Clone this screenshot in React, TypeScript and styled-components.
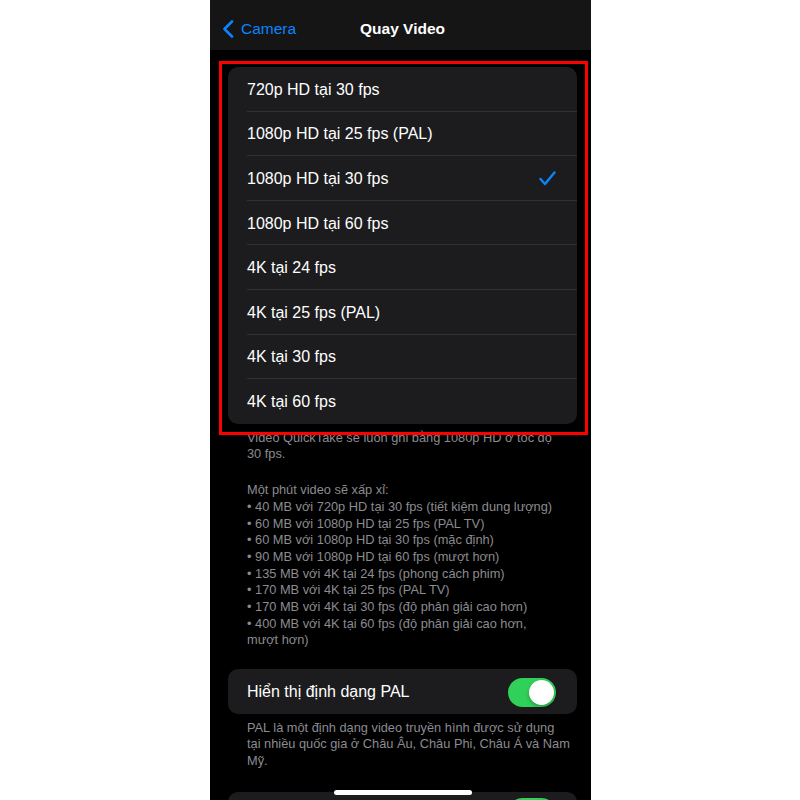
import styled, { createGlobalStyle } from 'styled-components';

const GlobalStyle = createGlobalStyle`
  html, body {
    margin: 0;
    padding: 0;
    background: #ffffff;
  }
  body {
    font-family: "Liberation Sans", Arial, sans-serif;
  }
`;

const formats = [
  '720p HD tại 30 fps',
  '1080p HD tại 25 fps (PAL)',
  '1080p HD tại 30 fps',
  '1080p HD tại 60 fps',
  '4K tại 24 fps',
  '4K tại 25 fps (PAL)',
  '4K tại 30 fps',
  '4K tại 60 fps',
];

const selected = 2;

const estimates = [
  '• 40 MB với 720p HD tại 30 fps (tiết kiệm dung lượng)',
  '• 60 MB với 1080p HD tại 25 fps (PAL TV)',
  '• 60 MB với 1080p HD tại 30 fps (mặc định)',
  '• 90 MB với 1080p HD tại 60 fps (mượt hơn)',
  '• 135 MB với 4K tại 24 fps (phong cách phim)',
  '• 170 MB với 4K tại 25 fps (PAL TV)',
  '• 170 MB với 4K tại 30 fps (độ phân giải cao hơn)',
  '• 400 MB với 4K tại 60 fps (độ phân giải cao hơn, mượt hơn)',
];

function BackChevron() {
  return (
    <svg width="12" height="18" viewBox="0 0 12 18">
      <path d="M10 1.5 L2.5 9 L10 16.5" fill="none" stroke="#0a84ff" strokeWidth="2.6" strokeLinecap="round" strokeLinejoin="round" />
    </svg>
  );
}

function Checkmark() {
  return (
    <svg width="17" height="15" viewBox="0 0 17 15">
      <path d="M1.5 8 L6 13 L15.5 1.5" fill="none" stroke="#0a84ff" strokeWidth="2.4" strokeLinecap="round" strokeLinejoin="round" />
    </svg>
  );
}

function Toggle({ on }: { on: boolean }) {
  return (
    <Track $on={on}>
      <Knob />
    </Track>
  );
}

export default function App() {
  return (
    <>
      <GlobalStyle />
      <Page>
        <Phone>
          <NavBar>
            <BackButton>
              <BackChevron />
              <span>Camera</span>
            </BackButton>
            <NavTitle>Quay Video</NavTitle>
          </NavBar>
          <Content>
            <Card>
              {formats.map((label, i) => (
                <Row key={label}>
                  <RowLabel>{label}</RowLabel>
                  {i === selected && <Checkmark />}
                </Row>
              ))}
            </Card>
            <Footnote>
              Video QuickTake sẽ luôn ghi bằng 1080p HD ở tốc độ 30 fps.
            </Footnote>
            <Footnote $gapTop>
              Một phút video sẽ xấp xỉ:
              {estimates.map((line) => (
                <Bullet key={line}>{line}</Bullet>
              ))}
            </Footnote>
            <Card $gapTop={20}>
              <Row>
                <RowLabel>Hiển thị định dạng PAL</RowLabel>
                <Toggle on />
              </Row>
            </Card>
            <Footnote $narrow>
              PAL là một định dạng video truyền hình được sử dụng tại nhiều quốc gia ở Châu Âu, Châu Phi, Châu Á và Nam Mỹ.
            </Footnote>
            <Card $gapTop={22}>
              <Row $peek>
                <span />
                <Toggle on />
              </Row>
            </Card>
          </Content>
          <HomeIndicator />
        </Phone>
        <Highlight />
      </Page>
    </>
  );
}

const Page = styled.div`
  position: relative;
  width: 800px;
  height: 800px;
  display: flex;
  padding-left: 210px;
  box-sizing: border-box;
  overflow: hidden;
`;

const Phone = styled.div`
  position: relative;
  width: 381px;
  height: 800px;
  background: #000000;
  overflow: hidden;
  display: flex;
  flex-direction: column;
`;

const NavBar = styled.div`
  position: relative;
  height: 50px;
  flex-shrink: 0;
  box-sizing: border-box;
  padding-top: 8px;
  background: #151515;
  display: flex;
  align-items: center;
  justify-content: center;
`;

const BackButton = styled.div`
  position: absolute;
  left: 12px;
  top: 20px;
  display: flex;
  align-items: center;
  gap: 7px;
  color: #0a84ff;
  font-size: 15.5px;
  line-height: 18px;
`;

const NavTitle = styled.div`
  color: #ffffff;
  font-size: 15.5px;
  font-weight: 700;
  margin-left: 4px;
`;

const Content = styled.div`
  display: flex;
  flex-direction: column;
  padding: 17px 14px 0 18px;
`;

const Card = styled.div<{ $gapTop?: number }>`
  background: #1c1c1e;
  border-radius: 10px;
  margin-top: ${({ $gapTop }) => $gapTop ?? 0}px;
  padding-left: 19px;
  flex-shrink: 0;
`;

const Row = styled.div<{ $peek?: boolean }>`
  height: 44.6px;
  box-sizing: border-box;
  display: flex;
  align-items: ${({ $peek }) => ($peek ? 'flex-start' : 'center')};
  justify-content: space-between;
  padding-top: ${({ $peek }) => ($peek ? '6px' : '2px')};
  padding-right: 21px;
  border-bottom: 1px solid #303032;

  &:last-child {
    border-bottom: none;
  }
`;

const RowLabel = styled.span`
  color: #ffffff;
  font-size: 16px;
`;

const Footnote = styled.div<{ $gapTop?: boolean; $narrow?: boolean }>`
  color: #8b8b90;
  font-size: 12.8px;
  line-height: 16.7px;
  padding: ${({ $gapTop }) => ($gapTop ? '19px' : '6px')} ${({ $narrow }) => ($narrow ? '6px' : '18px')} 0 19px;
`;

const Bullet = styled.div``;

const Track = styled.div<{ $on: boolean }>`
  width: 48px;
  height: 29px;
  border-radius: 15px;
  background: ${({ $on }) => ($on ? '#30d158' : '#39393d')};
  display: flex;
  align-items: center;
  justify-content: ${({ $on }) => ($on ? 'flex-end' : 'flex-start')};
  padding: 0 2px;
  box-sizing: border-box;
`;

const Knob = styled.div`
  width: 25px;
  height: 25px;
  border-radius: 50%;
  background: #ffffff;
  box-shadow: 0 2px 4px rgba(0, 0, 0, 0.25);
`;

const HomeIndicator = styled.div`
  position: absolute;
  left: 50%;
  bottom: 5px;
  width: 138px;
  height: 5px;
  margin-left: -67px;
  border-radius: 3px;
  background: #ffffff;
`;

const Highlight = styled.div`
  position: absolute;
  left: 219px;
  top: 61px;
  width: 369px;
  height: 374px;
  box-sizing: border-box;
  border: 3px solid #ff0000;
  pointer-events: none;
`;
